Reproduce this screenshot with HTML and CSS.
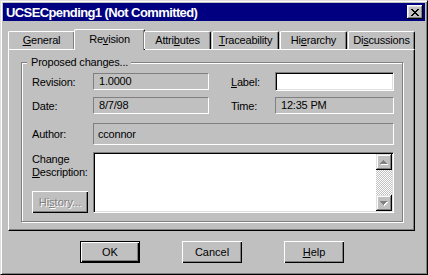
FILE: index.html
```html
<!DOCTYPE html>
<html>

<head>
    <title>UCSECpending1 (Not Committed)</title>
    <link rel="stylesheet" href="styles.css">
</head>

<body>

    <div class="window">
        <div class="titlebar">
            <span class="title">UCSECpending1 (Not Committed)</span>
            <button class="close-btn" title="Close">
                <svg width="8" height="7" viewBox="0 0 8 7" shape-rendering="crispEdges">
                    <path d="M0 0h2v1h-2zM6 0h2v1h-2zM1 1h2v1h-2zM5 1h2v1h-2zM2 2h4v1h-4zM3 3h2v1h-2zM2 4h4v1h-4zM1 5h2v1h-2zM5 5h2v1h-2zM0 6h2v1h-2zM6 6h2v1h-2z" />
                </svg>
            </button>
        </div>

        <div class="tabs">
            <div class="tab"><u>G</u>eneral</div>
            <div class="tab selected">Re<u>v</u>ision</div>
            <div class="tab">Attri<u>b</u>utes</div>
            <div class="tab"><u>T</u>raceability</div>
            <div class="tab">Hi<u>e</u>rarchy</div>
            <div class="tab">Di<u>s</u>cussions</div>
        </div>

        <div class="panel">
            <div class="group">
                <span class="group-caption">Proposed changes...</span>

                <div class="props">
                    <span>Revision:</span>
                    <span class="field">1.0000</span>
                    <span class="lbl2"><u>L</u>abel:</span>
                    <input type="text" class="edit" id="label">

                    <span>Date:</span>
                    <span class="field">8/7/98</span>
                    <span class="lbl2">Time:</span>
                    <span class="field">12:35 PM</span>
                </div>

                <div class="author-row">
                    <span>Author:</span>
                    <span class="field author">cconnor</span>
                </div>

                <div class="memo-row">
                    <div class="memo-side">
                        <span class="memo-label">Change<br><u>D</u>escription:</span>
                        <button class="btn history" disabled>Hi<u>s</u>tory...</button>
                    </div>
                    <div class="memo">
                        <div class="memo-text"></div>
                        <div class="scrollbar">
                            <div class="scroll-btn">
                                <svg width="8" height="5" viewBox="0 0 8 5" shape-rendering="crispEdges">
                                    <path fill="#fff" d="M4 1h1v1h-1zM3 2h3v1h-3zM2 3h5v1h-5zM1 4h7v1h-7z" />
                                    <path fill="#808080" d="M3 0h1v1h-1zM2 1h3v1h-3zM1 2h5v1h-5zM0 3h7v1h-7z" />
                                </svg>
                            </div>
                            <div class="scroll-track"></div>
                            <div class="scroll-btn">
                                <svg width="8" height="5" viewBox="0 0 8 5" shape-rendering="crispEdges">
                                    <path fill="#fff" d="M1 1h7v1h-7zM2 2h5v1h-5zM3 3h3v1h-3zM4 4h1v1h-1z" />
                                    <path fill="#808080" d="M0 0h7v1h-7zM1 1h5v1h-5zM2 2h3v1h-3zM3 3h1v1h-1z" />
                                </svg>
                            </div>
                        </div>
                    </div>
                </div>
            </div>
        </div>

        <div class="buttons">
            <button class="btn default">OK</button>
            <button class="btn">Cancel</button>
            <button class="btn"><u>H</u>elp</button>
        </div>
    </div>

</body>

</html>
```

FILE: styles.css
```css
body {
    margin: 0;
    background: #c0c0c0;
    font-family: "Liberation Sans", Arial, sans-serif;
    font-size: 11px;
    letter-spacing: -0.2px;
    color: #000;
}

.window {
    width: 428px;
    height: 275px;
    box-sizing: border-box;
    background: #c0c0c0;
    border: 1px solid;
    border-color: #dfdfdf #000 #000 #dfdfdf;
    box-shadow: inset 1px 1px #fff, inset -1px -1px #808080;
    padding: 2px;
}

/* title bar */
.titlebar {
    height: 18px;
    background: #000080;
    color: #fff;
    display: flex;
    align-items: center;
    justify-content: space-between;
    padding: 0 2px 0 3px;
}

.title {
    font-weight: bold;
    font-size: 13px;
    letter-spacing: -0.6px;
}

.close-btn {
    width: 16px;
    height: 14px;
    padding: 0;
    border: none;
    background: #c0c0c0;
    box-shadow: inset -1px -1px #000, inset 1px 1px #fff, inset -2px -2px #808080, inset 2px 2px #dfdfdf;
    display: flex;
    align-items: center;
    justify-content: center;
}

/* tabs */
.tabs {
    display: flex;
    align-items: flex-end;
    gap: 1px;
    height: 20px;
    margin: 8px 0 0 5px;
    position: relative;
    z-index: 1;
}

.tab {
    width: 67px;
    height: 18px;
    box-sizing: border-box;
    border: 1px solid #fff;
    border-right-color: #000;
    border-bottom: none;
    border-radius: 2px 2px 0 0;
    box-shadow: inset -1px 0 #808080;
    text-align: center;
    line-height: 17px;
}

.tab.selected {
    width: 71px;
    height: 21px;
    margin: 0 -2px -1px;
    padding-top: 1px;
    background: #c0c0c0;
}

/* page */
.panel {
    margin: 0 10px 0 5px;
    border: 1px solid #fff;
    border-right-color: #000;
    border-bottom-color: #000;
    box-shadow: inset -1px -1px #808080;
    padding: 12px 11px 8px 12px;
}

.group {
    position: relative;
    border: 1px solid #808080;
    box-shadow: 1px 1px #fff, inset 1px 1px #fff;
    padding: 9px 8px 8px 10px;
}

.group-caption {
    position: absolute;
    top: -7px;
    left: 5px;
    padding: 0 3px 0 4px;
    background: #c0c0c0;
    line-height: 13px;
}

.props {
    display: grid;
    grid-template-columns: 61px 116px 1fr 119px;
    grid-template-rows: 19px 19px;
    row-gap: 5px;
    align-items: center;
}

.lbl2 {
    padding-left: 22px;
}

.field {
    height: 17px;
    box-sizing: border-box;
    border: 1px solid;
    border-color: #808080 #fff #fff #808080;
    padding-left: 5px;
    line-height: 15px;
}

.edit {
    display: block;
    width: 100%;
    height: 19px;
    box-sizing: border-box;
    margin: 0;
    border: 1px solid;
    border-color: #808080 #fff #fff #808080;
    box-shadow: inset 1px 1px #000, inset -1px -1px #dfdfdf;
    background: #fff;
    padding: 0 3px;
    font: inherit;
    outline: none;
}

.author-row {
    display: grid;
    grid-template-columns: 61px 1fr;
    align-items: center;
    margin-top: 8px;
}

.field.author {
    height: 22px;
    line-height: 20px;
    padding-left: 4px;
}

.memo-row {
    display: grid;
    grid-template-columns: 61px 1fr;
    height: 61px;
    margin-top: 7px;
}

.memo-side {
    display: flex;
    flex-direction: column;
    justify-content: space-between;
    align-items: flex-start;
}

.memo-label {
    line-height: 13px;
    margin-top: 1px;
}

.memo {
    display: flex;
    border: 1px solid;
    border-color: #808080 #fff #fff #808080;
    box-shadow: inset 1px 1px #000, inset -1px -1px #dfdfdf;
    padding: 1px;
    background: #fff;
}

.memo-text {
    flex: 1;
}

.scrollbar {
    width: 16px;
    display: flex;
    flex-direction: column;
}

.scroll-btn {
    height: 16px;
    box-sizing: border-box;
    background: #c0c0c0;
    box-shadow: inset -1px -1px #000, inset 1px 1px #dfdfdf, inset -2px -2px #808080, inset 2px 2px #fff;
    display: flex;
    align-items: center;
    justify-content: center;
}

.scroll-track {
    flex: 1;
    background: repeating-conic-gradient(#c0c0c0 0 25%, #fff 0 50%) 0 0 / 2px 2px;
}

/* buttons */
.btn {
    width: 60px;
    height: 22px;
    padding: 0;
    border: none;
    background: #c0c0c0;
    box-shadow: inset 1px 1px #fff, inset -1px -1px #000, inset -2px -2px #808080;
    font: inherit;
    color: #000;
}

.btn.default {
    border: 1px solid #000;
}

.btn.history {
    width: 56px;
    color: #808080;
    text-shadow: 1px 1px #fff;
}

.buttons {
    display: flex;
    justify-content: center;
    gap: 42px;
    margin-top: 10px;
    padding-right: 4px;
}
```
